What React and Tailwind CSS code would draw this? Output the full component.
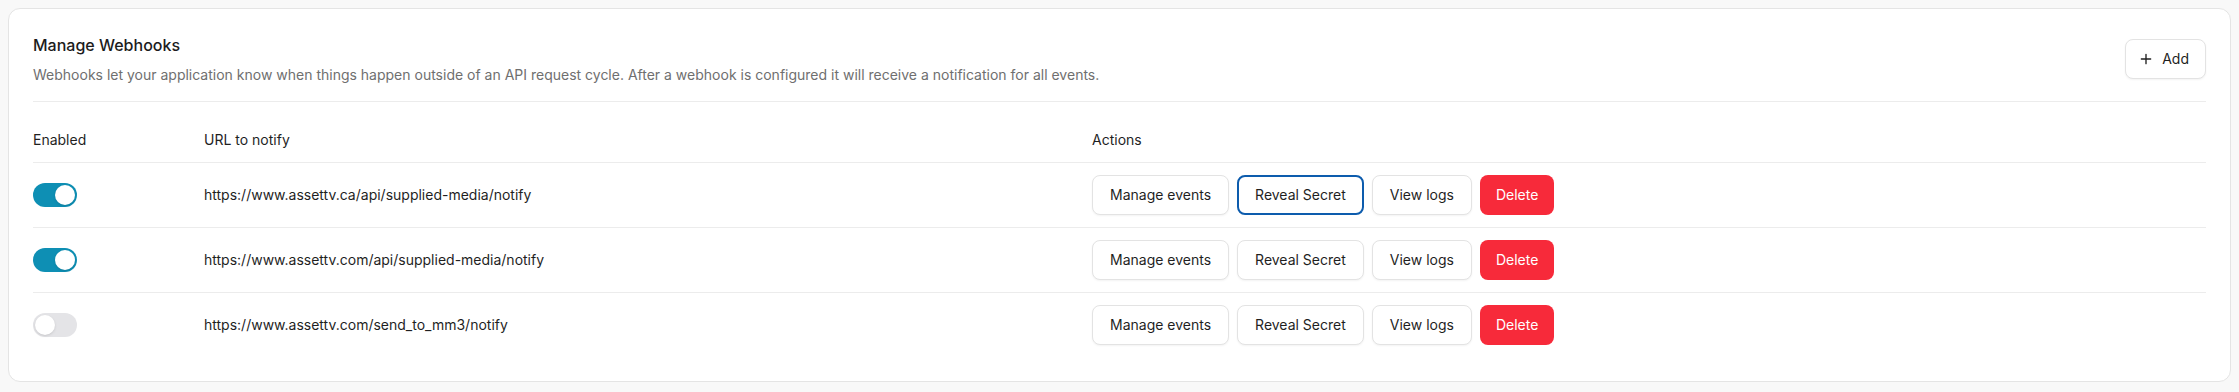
import React from "react";

const rows = [
  { on: true, url: "https://www.assettv.ca/api/supplied-media/notify", focus: true },
  { on: true, url: "https://www.assettv.com/api/supplied-media/notify" },
  { on: false, url: "https://www.assettv.com/send_to_mm3/notify" },
];

function Toggle({ on }) {
  return (
    <div
      className={
        on
          ? "flex h-6 w-11 items-center justify-end rounded-full bg-[#0e8fb4] p-[2px]"
          : "flex h-6 w-11 items-center justify-start rounded-full bg-[#e4e4e7] p-[2px]"
      }
    >
      <div className="h-5 w-5 rounded-full bg-white shadow-sm" />
    </div>
  );
}

function Btn({ children, focus }) {
  return (
    <button
      className={
        focus
          ? "flex h-10 items-center rounded-lg border-2 border-[#0d5cad] bg-white px-4 text-sm text-[#1f1f1f]"
          : "flex h-10 items-center rounded-lg border border-[#e3e3e3] bg-white px-[17px] text-sm text-[#1f1f1f] shadow-[0_1px_2px_rgba(0,0,0,0.05)]"
      }
    >
      {children}
    </button>
  );
}

export default function App() {
  return (
    <div className="min-h-screen bg-[#f8f8f8] p-2 font-['Inter',sans-serif]">
      <div className="rounded-xl border border-[#e4e4e4] bg-white p-6">
        <div className="flex items-center justify-between border-b border-[#ececec] pb-4">
          <div>
            <h2 className="text-base font-medium leading-6 text-[#1c1c1c]">Manage Webhooks</h2>
            <p className="mt-2 text-sm leading-5 text-[#6f6f6f]">
              Webhooks let your application know when things happen outside of an API request cycle. After a webhook is configured it will receive a notification for all events.
            </p>
          </div>
          <button className="flex h-10 items-center gap-2 rounded-lg border border-[#e3e3e3] bg-white pl-3 pr-4 text-sm text-[#1f1f1f] shadow-[0_1px_2px_rgba(0,0,0,0.05)]">
            <svg width="16" height="16" viewBox="0 0 24 24" fill="none" stroke="currentColor" strokeWidth="2" strokeLinecap="round">
              <path d="M5 12h14M12 5v14" />
            </svg>
            Add
          </button>
        </div>
        <div className="mt-4">
          <div className="grid h-[45px] grid-cols-[171px_888px_1fr] items-center border-b border-[#ececec] text-sm text-[#1f1f1f]">
            <div>Enabled</div>
            <div>URL to notify</div>
            <div>Actions</div>
          </div>
          {rows.map((r, i) => (
            <div
              key={i}
              className={
                i < rows.length - 1
                  ? "grid h-[65px] grid-cols-[171px_888px_1fr] items-center border-b border-[#ececec] text-sm text-[#1f1f1f]"
                  : "grid h-16 grid-cols-[171px_888px_1fr] items-center text-sm text-[#1f1f1f]"
              }
            >
              <div>
                <Toggle on={r.on} />
              </div>
              <div>{r.url}</div>
              <div className="flex items-center gap-2">
                <Btn>Manage events</Btn>
                <Btn focus={r.focus}>Reveal Secret</Btn>
                <Btn>View logs</Btn>
                <button className="flex h-10 items-center rounded-lg bg-[#f72a3a] px-4 text-sm text-white">
                  Delete
                </button>
              </div>
            </div>
          ))}
        </div>
      </div>
    </div>
  );
}
